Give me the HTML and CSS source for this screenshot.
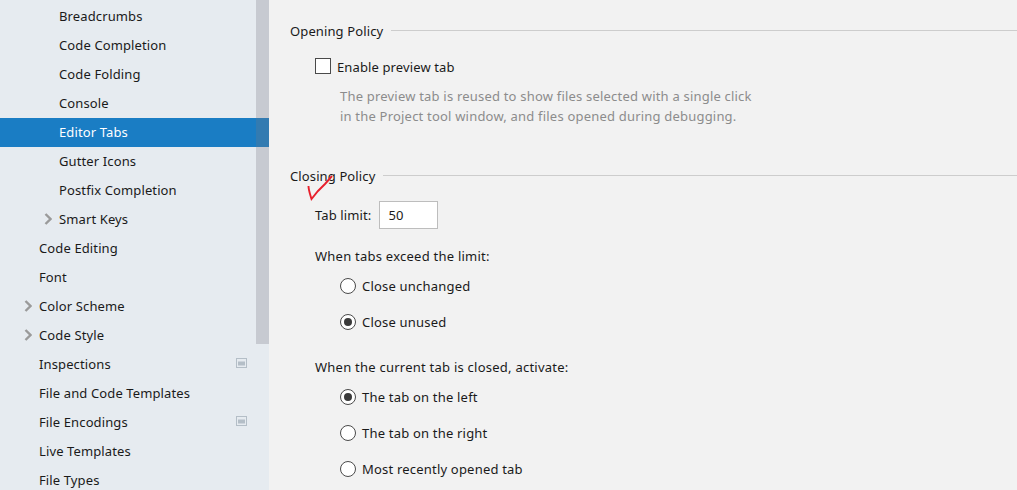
FILE: index.html
```html
<!DOCTYPE html>
<html lang="en">
<head>
<meta charset="utf-8">
<title>Editor Tabs</title>
<link rel="stylesheet" href="styles.css">
</head>
<body>
<div class="app">
  <aside class="sidebar">
    <ul class="tree">
      <li class="row lv2">Breadcrumbs</li>
      <li class="row lv2">Code Completion</li>
      <li class="row lv2">Code Folding</li>
      <li class="row lv2">Console</li>
      <li class="row lv2 selected">Editor Tabs</li>
      <li class="row lv2">Gutter Icons</li>
      <li class="row lv2">Postfix Completion</li>
      <li class="row lv2"><svg class="chev" viewBox="0 0 8 12"><path d="M1.5 1 L6.5 6 L1.5 11" /></svg>Smart Keys</li>
      <li class="row lv1">Code Editing</li>
      <li class="row lv1">Font</li>
      <li class="row lv1"><svg class="chev" viewBox="0 0 8 12"><path d="M1.5 1 L6.5 6 L1.5 11" /></svg>Color Scheme</li>
      <li class="row lv1"><svg class="chev" viewBox="0 0 8 12"><path d="M1.5 1 L6.5 6 L1.5 11" /></svg>Code Style</li>
      <li class="row lv1">Inspections<svg class="proj" viewBox="0 0 11 10"><rect x="0.5" y="0.5" width="10" height="9" class="proj-frame"/><rect x="2" y="3.5" width="7" height="4" class="proj-fill"/></svg></li>
      <li class="row lv1">File and Code Templates</li>
      <li class="row lv1">File Encodings<svg class="proj" viewBox="0 0 11 10"><rect x="0.5" y="0.5" width="10" height="9" class="proj-frame"/><rect x="2" y="3.5" width="7" height="4" class="proj-fill"/></svg></li>
      <li class="row lv1">Live Templates</li>
      <li class="row lv1">File Types</li>
    </ul>
    <div class="scrollbar"></div>
  </aside>
  <main class="content">
    <section class="group opening">
      <div class="group-title"><span>Opening Policy</span><i class="rule"></i></div>
      <label class="check"><span class="box"></span>Enable preview tab</label>
      <p class="hint">The preview tab is reused to show files selected with a single click<br>in the Project tool window, and files opened during debugging.</p>
    </section>
    <section class="group closing">
      <div class="group-title"><span>Closing Policy</span><i class="rule"></i></div>
      <div class="limit"><span>Tab limit:</span><span class="input">50</span></div>
      <div class="label exceed">When tabs exceed the limit:</div>
      <div class="radio"><span class="dot"></span>Close unchanged</div>
      <div class="radio"><span class="dot on"></span>Close unused</div>
      <div class="label current">When the current tab is closed, activate:</div>
      <div class="radio"><span class="dot on"></span>The tab on the left</div>
      <div class="radio"><span class="dot"></span>The tab on the right</div>
      <div class="radio"><span class="dot"></span>Most recently opened tab</div>
    </section>
  </main>
  <svg class="scribble" viewBox="0 0 30 28"><path d="M1.5 11 C1.5 15 3 19 4.5 24 L11 16 L18 9 L25 1"/></svg>
</div>
</body>
</html>
```
FILE: styles.css
```css
* { box-sizing: border-box; }
html, body { margin: 0; height: 100%; overflow: hidden; }
body {
  font-family: "Noto Sans", "Open Sans", sans-serif;
  font-size: 13px;
  letter-spacing: 0.12px;
  color: #1a1a1a;
  background: #f2f2f2;
}
.app { position: relative; display: flex; height: 490px; overflow: hidden; }

.sidebar { position: relative; width: 269px; flex: none; background: #e6ebf0; height: 490px; overflow: hidden; }
.tree { list-style: none; margin: 0; padding: 2px 0 0; }
.row { position: relative; height: 29px; line-height: 28px; white-space: nowrap; }
.lv1 { padding-left: 39px; }
.lv2 { padding-left: 59px; }
.selected { background: #1a7dc4; color: #fff; }
.chev { position: absolute; width: 8px; height: 12px; top: 8px; margin-left: -15px; fill: none; stroke: #9a9a9a; stroke-width: 2.4; }
.proj { position: absolute; left: 236px; top: 8px; width: 11px; height: 10px; }
.proj-frame { fill: #e6ebf0; stroke: #b4bec7; }
.proj-fill { fill: #b4bec7; }
.scrollbar { position: absolute; top: 0; left: 256px; width: 13px; height: 344px; background: rgba(120, 120, 130, 0.28); }

.content { flex: 1; min-width: 0; padding: 21px 0 0 21px; }
.group-title { display: flex; align-items: center; gap: 8px; height: 20px; line-height: 20px; }
.rule { flex: 1; height: 1px; background: #cdcdcd; margin-top: -2px; }
.check { display: flex; align-items: center; height: 20px; margin: 16px 0 0 25px; }
.box { width: 16px; height: 16px; border: 1px solid #4a4a4a; background: #fff; margin: 0 6px 2px 0; }
.hint { margin: 9px 0 0 50px; line-height: 20px; color: #8c8c8c; letter-spacing: 0.2px; }
.closing { margin-top: 40px; }
.limit { display: flex; align-items: center; gap: 8px; margin: 15px 0 0 25px; height: 28px; }
.input { width: 59px; height: 28px; border: 1px solid #bdbdbd; background: #fff; line-height: 26px; padding-left: 8px; }
.label { margin-left: 25px; height: 20px; line-height: 20px; letter-spacing: 0.24px; }
.exceed { margin-top: 17px; }
.current { margin-top: 25px; }
.radio { display: flex; align-items: center; height: 20px; margin: 16px 0 0 50px; letter-spacing: 0.2px; }
.exceed + .radio { margin-top: 10px; }
.current + .radio { margin-top: 10px; }
.dot { position: relative; width: 16px; height: 16px; border: 1.5px solid #4a4a4a; border-radius: 50%; background: #fff; margin-right: 6px; }
.dot.on::after { content: ""; position: absolute; left: 2.5px; top: 2.5px; width: 8px; height: 8px; border-radius: 50%; background: #3a3a3a; }
.scribble { position: absolute; left: 307px; top: 175px; width: 30px; height: 28px; fill: none; stroke: #e8202c; stroke-width: 1.9; }
```
